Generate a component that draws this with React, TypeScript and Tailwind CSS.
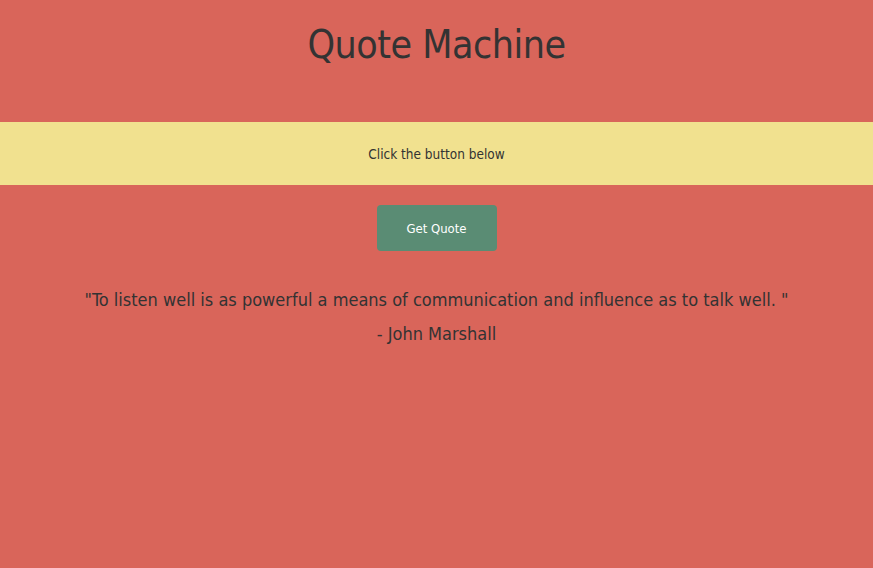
export default function App() {
  const font = { fontFamily: '"DejaVu Sans Condensed", "Liberation Sans", sans-serif' };
  return (
    <div className="min-h-[568px] w-full bg-[#d9655a] text-[#333333]" style={font}>
      <h1 className="pt-[14px] text-center text-[39px] leading-[62px] tracking-[-0.5px]">Quote Machine</h1>
      <div className="mt-[46px] flex h-[63px] items-center justify-center bg-[#f1e18f] pt-[2px] text-[13.5px]">
        Click the button below
      </div>
      <div className="mt-[20px] flex justify-center">
        <button className="h-[46px] w-[120px] rounded bg-[#5a8c74] pt-[2px] text-[13px] text-white">Get Quote</button>
      </div>
      <div className="mt-[32px] text-center text-[18px] leading-[34px]">
        <p>"To listen well is as powerful a means of communication and influence as to talk well. "</p>
        <p>- John Marshall</p>
      </div>
    </div>
  );
}
